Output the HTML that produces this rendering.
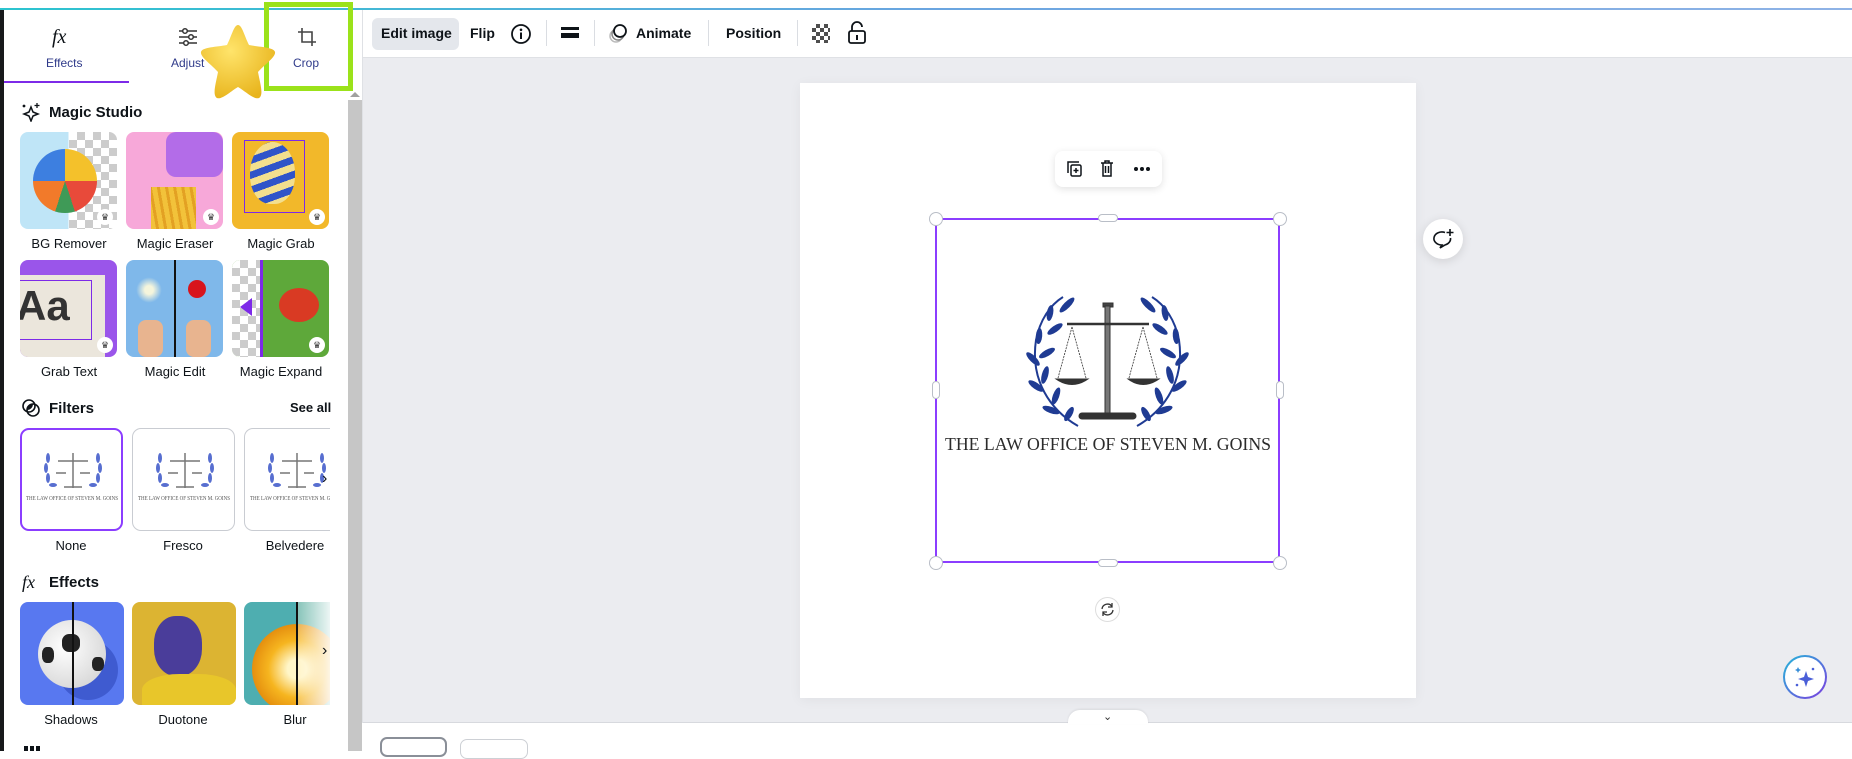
<!DOCTYPE html>
<html><head><meta charset="utf-8"><style>
*{box-sizing:border-box;margin:0;padding:0}
body{width:1852px;height:751px;overflow:hidden;position:relative;background:#fff;font-family:"Liberation Sans",sans-serif;color:#0e1318}
.a{position:absolute}
.lbl{position:absolute;font-size:13px;text-align:center;width:110px;color:#0e1318}
.th{position:absolute;width:97px;height:97px;border-radius:8px;overflow:hidden}
.h{position:absolute;font-size:15px;font-weight:bold;color:#0e1318}
.tb{position:absolute;top:25px;font-size:14px;font-weight:bold;color:#0e1318}
.dv{position:absolute;top:20px;width:1px;height:26px;background:#dadde2}
.crown{position:absolute;right:4px;bottom:4px;width:16px;height:16px;border-radius:50%;background:#fff;font-size:9px;text-align:center;line-height:16px;color:#333}
.chk{background-color:#fff;background-image:linear-gradient(45deg,#ccc 25%,transparent 25%,transparent 75%,#ccc 75%),linear-gradient(45deg,#ccc 25%,transparent 25%,transparent 75%,#ccc 75%);background-size:16px 16px;background-position:0 0,8px 8px}
.hd{position:absolute;width:14px;height:14px;border-radius:50%;background:#fff;border:1px solid #b9bec7}
</style></head><body>
<div class="a" style="left:0;top:0;width:1852px;height:9px;background:#fff"></div>
<div class="a" style="left:0;top:8px;width:1852px;height:2px;background:linear-gradient(90deg,#2bc4cf,#6aa5e0,#8fb3e6)"></div>
<div class="a" style="left:0;top:10px;width:4px;height:741px;background:#18191b"></div>
<div class="a" style="left:362px;top:58px;width:1490px;height:665px;background:#ebecf0"></div>
<div class="a" style="left:362px;top:57px;width:1490px;height:1px;background:#dfe1e5"></div>
<div class="a" style="left:362px;top:722px;width:1490px;height:1px;background:#d7d9de"></div>
<div class="a" style="left:362px;top:10px;width:1px;height:741px;background:#dfe1e5"></div>
<div class="a" style="left:372px;top:18px;width:87px;height:32px;border-radius:6px;background:#e4e7ec"></div>
<div class="tb" style="left:381px">Edit image</div>
<div class="tb" style="left:470px">Flip</div>
<svg class="a" style="left:510px;top:23px" width="22" height="22" viewBox="0 0 22 22"><circle cx="11" cy="11" r="9" fill="none" stroke="#0e1318" stroke-width="1.8"/><circle cx="11" cy="6.8" r="1.3" fill="#0e1318"/><rect x="10" y="9.5" width="2" height="6.5" fill="#0e1318"/></svg>
<div class="dv" style="left:546px"></div>
<div class="a" style="left:561px;top:27px;width:18px;height:3px;background:#0e1318"></div>
<div class="a" style="left:561px;top:33px;width:18px;height:5px;background:#0e1318"></div>
<div class="dv" style="left:594px"></div>
<svg class="a" style="left:608px;top:22px" width="22" height="22" viewBox="0 0 22 22"><circle cx="8" cy="14" r="6" fill="none" stroke="#bbb" stroke-width="1.5"/><circle cx="10" cy="12" r="6" fill="#fff" stroke="#888" stroke-width="1.5"/><circle cx="12" cy="9" r="6" fill="#fff" stroke="#0e1318" stroke-width="1.8"/></svg>
<div class="tb" style="left:636px">Animate</div>
<div class="dv" style="left:708px"></div>
<div class="tb" style="left:726px">Position</div>
<div class="dv" style="left:797px"></div>
<div class="a" style="left:812px;top:24px;width:18px;height:19px;background-image:linear-gradient(45deg,#222 25%,transparent 25%,transparent 75%,#222 75%),linear-gradient(45deg,#222 25%,transparent 25%,transparent 75%,#222 75%);background-size:8px 8px;background-position:0 0,4px 4px;opacity:.8"></div>
<svg class="a" style="left:846px;top:20px" width="22" height="26" viewBox="0 0 22 26"><path d="M6 11V7a5 5 0 0 1 10 0" fill="none" stroke="#0e1318" stroke-width="1.8"/><rect x="3" y="11" width="16" height="12" rx="2" fill="none" stroke="#0e1318" stroke-width="1.8"/><rect x="10" y="15" width="2" height="5" fill="#0e1318"/></svg>

<div class="a" style="left:52px;top:26px;font-family:'Liberation Serif',serif;font-style:italic;font-size:20px">fx</div>
<div class="a" style="left:46px;top:56px;font-size:12px;color:#2f3a8a">Effects</div>
<div class="a" style="left:4px;top:81px;width:125px;height:2px;background:#7d2ae8"></div>
<svg class="a" style="left:177px;top:27px" width="22" height="20" viewBox="0 0 22 20"><g stroke="#333" stroke-width="1.5" fill="#fff"><line x1="2" y1="4" x2="20" y2="4"/><line x1="2" y1="10" x2="20" y2="10"/><line x1="2" y1="16" x2="20" y2="16"/><circle cx="8" cy="4" r="2.3"/><circle cx="14" cy="10" r="2.3"/><circle cx="9" cy="16" r="2.3"/></g></svg>
<div class="a" style="left:171px;top:56px;font-size:12px;color:#2f3a8a">Adjust</div>
<svg class="a" style="left:295px;top:25px" width="24" height="24" viewBox="0 0 24 24"><g fill="none" stroke="#444" stroke-width="1.6"><path d="M7 3v14h14"/><path d="M3 7h14v14"/></g></svg>
<div class="a" style="left:293px;top:56px;font-size:12px;color:#2f3a8a">Crop</div>
<div class="a" style="left:264px;top:2px;width:89px;height:89px;border:5px solid #9be21a"></div>
<svg class="a" style="left:196px;top:19px" width="84" height="84" viewBox="0 0 84 84"><defs><radialGradient id="sg" cx="40%" cy="35%" r="70%"><stop offset="0" stop-color="#ffe46b"/><stop offset="1" stop-color="#e8b41c"/></radialGradient></defs><path d="M42 6 C46 6 48 16 53 26 C63 28 78 28 79 33 C80 38 68 46 62 53 C64 64 68 76 63 79 C58 81 49 72 42 68 C35 72 26 81 21 79 C16 76 20 64 22 53 C16 46 4 38 5 33 C6 28 21 28 31 26 C36 16 38 6 42 6Z" fill="url(#sg)"/></svg>
<div class="a" style="left:348px;top:100px;width:14px;height:651px;background:#c6c6c6"></div>
<div class="a" style="left:350px;top:92px;width:0;height:0;border-left:5px solid transparent;border-right:5px solid transparent;border-bottom:5px solid #a0a0a0"></div>

<svg class="a" style="left:21px;top:102px" width="20" height="20" viewBox="0 0 20 20"><path d="M10 5 L12 10 L17 12 L12 14 L10 19 L8 14 L3 12 L8 10Z" fill="none" stroke="#0e1318" stroke-width="1.5"/><circle cx="3" cy="4" r="1.4" fill="#0e1318"/><path d="M16 1v5M13.5 3.5h5" stroke="#0e1318" stroke-width="1.3"/></svg>
<div class="h" style="left:49px;top:104px">Magic Studio</div>
<div class="th" style="left:20px;top:132px;background:linear-gradient(90deg,#bfe5f7 0 50%,transparent 50%)"><div class="a chk" style="left:49px;top:0;width:48px;height:97px"></div><div class="a" style="left:13px;top:17px;width:64px;height:64px;border-radius:50%;background:conic-gradient(#f4c12b 0 25%,#e84a3a 25% 45%,#3f9a57 45% 55%,#f27a2a 55% 75%,#3d7fe0 75%)"></div><div class="crown">♛</div></div>
<div class="th" style="left:126px;top:132px;background:#f7a8d9"><div class="a" style="left:40px;top:0;width:57px;height:45px;background:#b36ce8;border-radius:10px"></div><div class="a" style="left:25px;top:55px;width:45px;height:42px;background:repeating-linear-gradient(80deg,#f2c23a 0 5px,#e3a123 5px 8px)"></div><div class="crown">♛</div></div>
<div class="th" style="left:232px;top:132px;background:#f2b82a"><div class="a" style="left:18px;top:10px;width:45px;height:62px;border-radius:50% 50% 45% 45%;background:repeating-linear-gradient(160deg,#2f54c9 0 7px,#f3df8e 7px 14px)"></div><div class="a" style="left:12px;top:8px;width:61px;height:73px;border:1.5px solid #7d2ae8"></div><div class="crown">♛</div></div>
<div class="lbl" style="left:14px;top:236px">BG Remover</div>
<div class="lbl" style="left:120px;top:236px">Magic Eraser</div>
<div class="lbl" style="left:226px;top:236px">Magic Grab</div>

<div class="th" style="left:20px;top:260px;background:#9a55ea"><div class="a" style="left:0;top:15px;width:85px;height:82px;background:#ebe6dc"></div><div class="a" style="left:-4px;top:22px;font-size:42px;font-weight:bold;color:#333">Aa</div><div class="a" style="left:0;top:20px;width:72px;height:60px;border:1.5px solid #7d2ae8;border-left:none"></div><div class="crown">♛</div></div>
<div class="th" style="left:126px;top:260px;background:#7fb8ea"><div class="a" style="left:48px;top:0;width:1.5px;height:97px;background:#111"></div><div class="a" style="left:12px;top:60px;width:25px;height:37px;background:#e8b48f;border-radius:8px"></div><div class="a" style="left:60px;top:60px;width:25px;height:37px;background:#e8b48f;border-radius:8px"></div><div class="a" style="left:62px;top:20px;width:18px;height:18px;background:#d8141c;border-radius:50%"></div><div class="a" style="left:8px;top:15px;width:30px;height:30px;background:radial-gradient(#f5f5dc 20%,transparent 60%)"></div></div>
<div class="th" style="left:232px;top:260px;background:#5ea83a"><div class="a chk" style="left:0;top:0;width:28px;height:97px"></div><div class="a" style="left:28px;top:0;width:3px;height:97px;background:#7d2ae8"></div><div class="a" style="left:8px;top:38px;width:0;height:0;border-top:9px solid transparent;border-bottom:9px solid transparent;border-right:12px solid #7d2ae8"></div><div class="a" style="left:47px;top:28px;width:40px;height:34px;background:#d93a23;border-radius:50%"></div><div class="crown">♛</div></div>
<div class="lbl" style="left:14px;top:364px">Grab Text</div>
<div class="lbl" style="left:120px;top:364px">Magic Edit</div>
<div class="lbl" style="left:226px;top:364px">Magic Expand</div>

<svg class="a" style="left:21px;top:398px" width="20" height="20" viewBox="0 0 20 20"><circle cx="8" cy="8" r="6" fill="none" stroke="#0e1318" stroke-width="1.6"/><circle cx="12" cy="12" r="6" fill="none" stroke="#0e1318" stroke-width="1.6"/><path d="M12 6a6 6 0 0 0-6 6a6 6 0 0 0 6-6" fill="#0e1318"/></svg>
<div class="h" style="left:49px;top:400px">Filters</div>
<div class="a" style="left:290px;top:400px;font-size:13px;font-weight:bold">See all</div>
<div class="a" style="left:20px;top:428px;width:103px;height:103px;border:2px solid #8b3dff;border-radius:9px"></div>
<div class="a" style="left:132px;top:428px;width:103px;height:103px;border:1px solid #c9ccd2;border-radius:9px"></div>
<div class="a" style="left:244px;top:428px;width:86px;height:103px;border:1px solid #c9ccd2;border-right:none;border-radius:9px 0 0 9px"></div>
<svg class="a" style="left:20px;top:428px" width="310" height="103"><g id="mini"><g fill="#3a55c8" opacity=".85"><ellipse cx="28" cy="30" rx="2" ry="5"/><ellipse cx="26" cy="40" rx="2" ry="5"/><ellipse cx="28" cy="50" rx="2" ry="5"/><ellipse cx="33" cy="57" rx="4" ry="2"/><ellipse cx="78" cy="30" rx="2" ry="5"/><ellipse cx="80" cy="40" rx="2" ry="5"/><ellipse cx="78" cy="50" rx="2" ry="5"/><ellipse cx="73" cy="57" rx="4" ry="2"/></g><g stroke="#777" stroke-width="1.5" fill="none"><line x1="53" y1="25" x2="53" y2="60"/><line x1="38" y1="33" x2="68" y2="33"/><line x1="44" y1="59" x2="62" y2="59"/><path d="M36 45h10M60 45h10"/></g><text x="6" y="72" font-family="Liberation Serif,serif" font-size="6" fill="#555" textLength="92" lengthAdjust="spacingAndGlyphs">THE LAW OFFICE OF STEVEN M. GOINS</text></g><use href="#mini" x="112"/><use href="#mini" x="224"/></svg>
<div class="a" style="left:322px;top:470px;font-size:16px">›</div>
<div class="lbl" style="left:16px;top:538px">None</div>
<div class="lbl" style="left:128px;top:538px">Fresco</div>
<div class="lbl" style="left:240px;top:538px">Belvedere</div>

<div class="a" style="left:22px;top:572px;font-family:'Liberation Serif',serif;font-style:italic;font-size:18px">fx</div>
<div class="h" style="left:49px;top:574px">Effects</div>
<div class="th" style="left:20px;top:602px;width:104px;height:103px;background:#5878f0"><div class="a" style="left:38px;top:38px;width:60px;height:60px;border-radius:50%;background:#3f5bd0"></div><div class="a" style="left:18px;top:18px;width:68px;height:68px;border-radius:50%;background:radial-gradient(circle at 40% 40%,#fff,#ccc);"></div><div class="a" style="left:42px;top:32px;width:18px;height:18px;background:#222;border-radius:40%"></div><div class="a" style="left:22px;top:45px;width:12px;height:16px;background:#222;border-radius:40%"></div><div class="a" style="left:72px;top:55px;width:12px;height:14px;background:#222;border-radius:40%"></div><div class="a" style="left:52px;top:0;width:1.5px;height:103px;background:#111"></div></div>
<div class="th" style="left:132px;top:602px;width:104px;height:103px;background:#dcb432"><div class="a" style="left:22px;top:14px;width:48px;height:60px;border-radius:45%;background:#4a3d9a"></div><div class="a" style="left:10px;top:72px;width:94px;height:40px;border-radius:40% 40% 0 0;background:#e8c62a"></div></div>
<div class="th" style="left:244px;top:602px;width:86px;height:103px;border-radius:8px 0 0 8px;background:#4eaeb0"><div class="a" style="left:8px;top:22px;width:90px;height:90px;border-radius:50%;background:radial-gradient(#fff6c8 15%,#f6b51f 45%,#e5900f 70%)"></div><div class="a" style="left:52px;top:0;width:40px;height:103px;background:linear-gradient(90deg,rgba(255,240,200,.3),#fff)"></div><div class="a" style="left:52px;top:0;width:1.5px;height:103px;background:#111"></div></div>
<div class="a" style="left:322px;top:642px;font-size:16px">›</div>
<div class="lbl" style="left:16px;top:712px">Shadows</div>
<div class="lbl" style="left:128px;top:712px">Duotone</div>
<div class="lbl" style="left:240px;top:712px">Blur</div>
<div class="a" style="left:24px;top:746px;width:16px;height:5px;background:repeating-linear-gradient(90deg,#0e1318 0 4px,transparent 4px 6px)"></div>

<div class="a" style="left:800px;top:83px;width:616px;height:615px;background:#fff;box-shadow:0 2px 12px rgba(0,0,0,.05)"></div>
<div class="a" style="left:1055px;top:151px;width:107px;height:36px;background:#fff;border-radius:8px;box-shadow:0 2px 8px rgba(0,0,0,.12)"></div>
<svg class="a" style="left:1064px;top:158px" width="90" height="22" viewBox="0 0 90 22"><g fill="none" stroke="#0e1318" stroke-width="1.5"><path d="M4 15V4h11"/><rect x="7" y="7" width="10" height="11" rx="1.5"/><path d="M12 10v5M9.5 12.5h5"/><path d="M37 5h12M41 5V3h4v2M39 5v13h8V5M41.5 8v7M44.5 8v7"/></g><circle cx="72" cy="11" r="2" fill="#0e1318"/><circle cx="78" cy="11" r="2" fill="#0e1318"/><circle cx="84" cy="11" r="2" fill="#0e1318"/></svg>
<div class="a" style="left:935px;top:218px;width:345px;height:345px;border:2px solid #8b3dff"></div>
<div class="hd" style="left:929px;top:212px"></div><div class="hd" style="left:1273px;top:212px"></div>
<div class="hd" style="left:929px;top:556px"></div><div class="hd" style="left:1273px;top:556px"></div>
<div class="a" style="left:1098px;top:214px;width:20px;height:8px;border-radius:4px;background:#fff;border:1px solid #b9bec7"></div>
<div class="a" style="left:1098px;top:559px;width:20px;height:8px;border-radius:4px;background:#fff;border:1px solid #b9bec7"></div>
<div class="a" style="left:932px;top:381px;width:8px;height:18px;border-radius:4px;background:#fff;border:1px solid #b9bec7"></div>
<div class="a" style="left:1276px;top:381px;width:8px;height:18px;border-radius:4px;background:#fff;border:1px solid #b9bec7"></div>
<svg class="a" style="left:0;top:0" width="1852" height="751">
<g id="laurel" fill="#1f3b93">
<path d="M1078 426 C1050 410 1030 380 1036 340 C1040 320 1050 305 1063 297" fill="none" stroke="#1f3b93" stroke-width="2"/>
<ellipse cx="1067" cy="305" rx="10" ry="3.2" transform="rotate(-45 1067 305)"/>
<ellipse cx="1050" cy="313" rx="8" ry="3.2" transform="rotate(-80 1050 313)"/>
<ellipse cx="1055" cy="329" rx="9" ry="3.2" transform="rotate(-35 1055 329)"/>
<ellipse cx="1039" cy="336" rx="8" ry="3.2" transform="rotate(-85 1039 336)"/>
<ellipse cx="1047" cy="353" rx="9" ry="3.2" transform="rotate(-30 1047 353)"/>
<ellipse cx="1033" cy="359" rx="9" ry="3.2" transform="rotate(45 1033 359)"/>
<ellipse cx="1045" cy="375" rx="9" ry="3.2" transform="rotate(-75 1045 375)"/>
<ellipse cx="1036" cy="386" rx="9" ry="3.2" transform="rotate(35 1036 386)"/>
<ellipse cx="1056" cy="396" rx="9" ry="3.2" transform="rotate(-70 1056 396)"/>
<ellipse cx="1051" cy="410" rx="9" ry="3.2" transform="rotate(20 1051 410)"/>
<ellipse cx="1069" cy="414" rx="8" ry="3.2" transform="rotate(-60 1069 414)"/>
</g>
<use href="#laurel" transform="translate(2215,0) scale(-1,1)"/>
<g stroke="#333" fill="none">
<rect x="1103" y="303" width="10" height="4" fill="#444"/>
<rect x="1105" y="306" width="5" height="110" fill="#777" stroke-width="1"/>
<line x1="1067" y1="324" x2="1149" y2="324" stroke-width="2.5"/>
<path d="M1072 327 L1058 378 M1072 327 L1086 378 M1143 327 L1129 378 M1143 327 L1157 378" stroke-width=".8" stroke-dasharray="2 1"/>
<path d="M1056 379 Q1072 390 1088 379Z" fill="#333"/>
<path d="M1128 379 Q1143 390 1159 379Z" fill="#333"/>
<rect x="1079" y="413" width="57" height="6" rx="3" fill="#333"/>
</g>
<text x="1108" y="450" font-family="Liberation Serif,serif" font-size="18" text-anchor="middle" fill="#2b2b2b" textLength="326" lengthAdjust="spacingAndGlyphs">THE LAW OFFICE OF STEVEN M. GOINS</text>
</svg>
<div class="a" style="left:1095px;top:597px;width:25px;height:25px;border-radius:50%;background:#fff;border:1px solid #ddd"></div>
<svg class="a" style="left:1099px;top:601px" width="17" height="17" viewBox="0 0 17 17"><path d="M3 8a5.5 5.5 0 0 1 10-2.5M14 9a5.5 5.5 0 0 1-10 2.5" fill="none" stroke="#333" stroke-width="1.3"/><path d="M13 2v4h-4M4 15v-4h4" fill="none" stroke="#333" stroke-width="1.3"/></svg>
<div class="a" style="left:1423px;top:219px;width:40px;height:40px;border-radius:50%;background:#fff;box-shadow:0 2px 10px rgba(0,0,0,.12)"></div>
<svg class="a" style="left:1432px;top:228px" width="24" height="22" viewBox="0 0 24 22"><path d="M13 4.5A8 6.5 0 1 0 10 17l-2 3 5-3A8 6.5 0 0 0 18.5 10" fill="none" stroke="#0e1318" stroke-width="1.6"/><path d="M18 1v7M14.5 4.5h7" stroke="#0e1318" stroke-width="1.6"/></svg>
<div class="a" style="left:1783px;top:655px;width:44px;height:44px;border-radius:50%;background:linear-gradient(135deg,#23b8d8,#7d3ce0);"></div>
<div class="a" style="left:1785px;top:657px;width:40px;height:40px;border-radius:50%;background:#fff"></div>
<svg class="a" style="left:1793px;top:665px" width="24" height="24" viewBox="0 0 24 24"><path d="M13 6 L15 12 L21 14 L15 16 L13 22 L11 16 L5 14 L11 12Z" fill="#4a5fd8"/><path d="M5 2l1 2 2 1-2 1-1 2-1-2-2-1 2-1z" fill="#3a8fd8"/><circle cx="20" cy="4" r="1.3" fill="#4a5fd8"/><circle cx="4" cy="20" r="1.3" fill="#4a5fd8"/></svg>
<div class="a" style="left:362px;top:723px;width:1490px;height:28px;background:#fff"></div>
<div class="a" style="left:1068px;top:710px;width:80px;height:14px;background:#fff;border-radius:12px 12px 0 0;box-shadow:0 -1px 2px rgba(0,0,0,.08)"></div>
<div class="a" style="left:1103px;top:710px;font-size:11px;color:#333">⌄</div>
<div class="a" style="left:380px;top:737px;width:67px;height:20px;border:2px solid #8a8f98;border-radius:7px"></div>
<div class="a" style="left:460px;top:739px;width:68px;height:20px;border:1px solid #cdd0d5;border-radius:7px"></div>
</body></html>
